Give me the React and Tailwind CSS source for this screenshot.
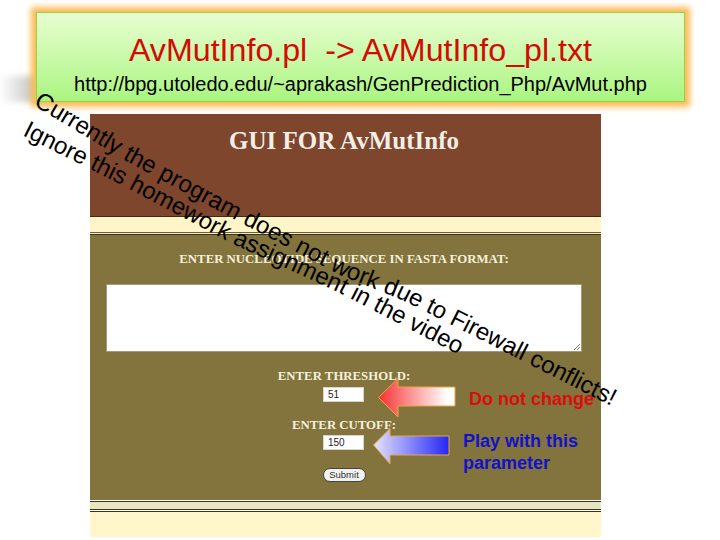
const serif = "font-['Liberation_Serif',serif]";
const sans = "font-['Liberation_Sans',Arial,sans-serif]";

function Label({ children, className = "" }) {
  return <p className={`${serif} text-center text-[12.8px] leading-[14px] font-bold text-[#f4f0dc] ${className}`}>{children}</p>;
}

function Field({ value }) {
  return (
    <div className="w-[41px] h-[15px] bg-white border border-[#d8d6cc] text-[10px] leading-[13px] pl-1 text-[#222] font-['Liberation_Sans',sans-serif]">{value}</div>
  );
}

function ArrowRed() {
  return (
    <svg width="79" height="41" viewBox="0 0 79 41" className="block">
      <defs>
        <linearGradient id="r" x1="0" x2="1" y1="0" y2="0">
          <stop offset="0" stopColor="#f83030" />
          <stop offset="0.4" stopColor="#fb8f8f" />
          <stop offset="0.9" stopColor="#ffffff" />
        </linearGradient>
      </defs>
      <path d="M0.5 19.5 L20 0.5 V9 L77 9 V28 L20 28 V39 Z" fill="url(#r)" stroke="#eda23e" strokeWidth="1" />
    </svg>
  );
}

function ArrowBlue() {
  return (
    <svg width="78" height="38" viewBox="0 0 78 38" className="block">
      <defs>
        <linearGradient id="b" x1="0" x2="1" y1="0" y2="0">
          <stop offset="0" stopColor="#e4e4ff" />
          <stop offset="1" stopColor="#2626f5" />
        </linearGradient>
      </defs>
      <path d="M0.5 17 L17 0.5 V8 L76 8 V27 L17 27 V36 Z" fill="url(#b)" stroke="#e8a24e" strokeWidth="1" />
    </svg>
  );
}

export default function App() {
  return (
    <div className="relative w-[720px] h-[540px] overflow-hidden bg-white">
      <div className="pt-[114px] pl-[90px]">
        <div className="w-[511px] h-[423px] flex flex-col">
          <div className="h-[102px] bg-[#7d462d] pt-[14px] text-center">
            <p className={`${serif} text-[25px] leading-[26px] font-bold text-[#f2eee6] -ml-[3px]`}>GUI FOR AvMutInfo</p>
          </div>
          <div className="h-[1px] bg-[#3f2a14]" />
          <div className="h-[15px] bg-[#fff5c9]" />
          <div className="h-[1px] bg-[#6b6132]" />
          <div className="h-[1px] bg-[#f2eccc]" />
          <div className="h-[1px] bg-[#3a3315]" />
          <div className="h-[265px] bg-[#82743c] flex flex-col items-center pt-[17px]">
            <Label className="-ml-[3px]">ENTER NUCLEOTIDE SEQUENCE IN FASTA FORMAT:</Label>
            <div className="relative mt-[18px] -ml-[4px] w-[476px] h-[68px] bg-white border border-[#a09a7c]">
              <svg className="absolute right-0 bottom-0" width="8" height="8" viewBox="0 0 8 8">
                <path d="M1 7 L7 1 M4 7 L7 4" stroke="#777" strokeWidth="1" />
              </svg>
            </div>
            <Label className="mt-[17px] -ml-[3px]">ENTER THRESHOLD:</Label>
            <div className="mt-[4px] -ml-[4px]"><Field value="51" /></div>
            <Label className="mt-[16px] -ml-[3px]">ENTER CUTOFF:</Label>
            <div className="mt-[3px] -ml-[4px]"><Field value="150" /></div>
            <div className="mt-[18px] -ml-[3px] w-[43px] h-[14px] rounded-[7px] bg-[#f1f1ee] border border-[#444] text-[9.5px] leading-[12px] text-center text-[#333] font-['Liberation_Sans',sans-serif]">Submit</div>
          </div>
          <div className="h-[1px] bg-white" />
          <div className="h-[1px] bg-[#3a3315]" />
          <div className="h-[7px] bg-[#e8e5c0]" />
          <div className="h-[1px] bg-[#3a3315]" />
          <div className="h-[1px] bg-white" />
          <div className="h-[1px] bg-[#3a3315]" />
          <div className="flex-1 bg-[#fff6cc]" />
        </div>
      </div>

      <div className="absolute left-0 top-[76px] w-[40px] h-[26px] bg-gradient-to-r from-white to-[#bcbcbc] blur-[3px]" />

      <div className="absolute left-[36px] top-[12px] w-[649px] h-[90px] border border-[#9ccf45] bg-gradient-to-b from-[#e8fdd0] to-[#a9f57f] shadow-[0_0_6px_5px_#fbbc55] flex flex-col items-center">
        <p className={`${sans} text-[32.2px] leading-[36px] text-[#d40b05] mt-[19px] whitespace-pre`}>AvMutInfo.pl  -&gt; AvMutInfo_pl.txt</p>
        <p className={`${sans} text-[20px] leading-[22px] text-black mt-[5px] whitespace-pre`}>http://bpg.utoledo.edu/~aprakash/GenPrediction_Php/AvMut.php</p>
      </div>

      <div className="absolute left-[378px] top-[378px]"><ArrowRed /></div>
      <div className="absolute left-[373px] top-[428px]"><ArrowBlue /></div>
      <p className={`${sans} absolute left-[469px] top-[389px] text-[18px] leading-[20px] whitespace-nowrap font-bold text-[#dc0c0c]`}>Do not change</p>
      <p className={`${sans} absolute left-[463px] top-[430px] w-[130px] text-[18px] leading-[22px] font-bold text-[#1212c8]`}>Play with this parameter</p>

      <svg className="absolute inset-0" width="720" height="540" viewBox="0 0 720 540">
        <defs>
          <path id="l1" d="M33 105 L130 163 L228 216 L340 275 L400 299 L450 324 L625 413" />
          <path id="l2" d="M22 135 L118 183 L231 243 L340 293 L465 358" />
        </defs>
        <text fontFamily="Liberation Sans, Arial, sans-serif" fontSize="24" fill="#000">
          <textPath href="#l1">Currently the program does not work due to Firewall conflicts!</textPath>
        </text>
        <text fontFamily="Liberation Sans, Arial, sans-serif" fontSize="24" fill="#000">
          <textPath href="#l2">Ignore this homework assignment in the video</textPath>
        </text>
      </svg>
    </div>
  );
}
